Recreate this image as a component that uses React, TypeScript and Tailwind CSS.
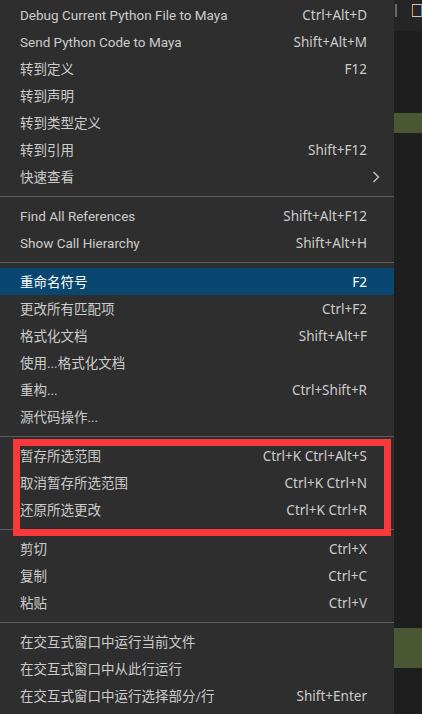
type Item = { label: string; keys?: string; submenu?: boolean; active?: boolean };

const groups: Item[][] = [
  [
    { label: "Debug Current Python File to Maya", keys: "Ctrl+Alt+D" },
    { label: "Send Python Code to Maya", keys: "Shift+Alt+M" },
    { label: "转到定义", keys: "F12" },
    { label: "转到声明" },
    { label: "转到类型定义" },
    { label: "转到引用", keys: "Shift+F12" },
    { label: "快速查看", submenu: true },
  ],
  [
    { label: "Find All References", keys: "Shift+Alt+F12" },
    { label: "Show Call Hierarchy", keys: "Shift+Alt+H" },
  ],
  [
    { label: "重命名符号", keys: "F2", active: true },
    { label: "更改所有匹配项", keys: "Ctrl+F2" },
    { label: "格式化文档", keys: "Shift+Alt+F" },
    { label: "使用...格式化文档" },
    { label: "重构...", keys: "Ctrl+Shift+R" },
    { label: "源代码操作..." },
  ],
  [
    { label: "暂存所选范围", keys: "Ctrl+K Ctrl+Alt+S" },
    { label: "取消暂存所选范围", keys: "Ctrl+K Ctrl+N" },
    { label: "还原所选更改", keys: "Ctrl+K Ctrl+R" },
  ],
  [
    { label: "剪切", keys: "Ctrl+X" },
    { label: "复制", keys: "Ctrl+C" },
    { label: "粘贴", keys: "Ctrl+V" },
  ],
  [
    { label: "在交互式窗口中运行当前文件" },
    { label: "在交互式窗口中从此行运行" },
    { label: "在交互式窗口中运行选择部分/行", keys: "Shift+Enter" },
  ],
];

const MenuRow = ({ item }: { item: Item }) => (
  <div
    className={
      item.active
        ? "relative flex h-[27px] items-center justify-between pl-[20px] pr-[27px] pt-[2px] bg-[#094771] text-white"
        : "relative flex h-[27px] items-center justify-between pl-[20px] pr-[27px] pt-[2px] text-[#cccccc]"
    }
  >
    <span className="font-['Roboto','Noto_Sans_CJK_SC',sans-serif]">{item.label}</span>
    {item.keys && <span>{item.keys}</span>}
    {item.submenu && (
      <svg
        className="absolute right-[14px] top-[8px]"
        width="8"
        height="12"
        viewBox="0 0 8 12"
        fill="none"
        stroke="#cccccc"
        strokeWidth="1.2"
      >
        <path d="M1.5 1 L6.5 6 L1.5 11" />
      </svg>
    )}
  </div>
);

export default function App() {
  return (
    <div
      className="relative flex h-[714px] w-[422px] overflow-hidden bg-[#1e1e1e] text-[13.5px]"
      style={{ fontFamily: '"Noto Sans", "Noto Sans CJK SC", sans-serif' }}
    >
      <div className="w-[394px] shrink-0 bg-[#2e2e2e] pt-[1px]">
        {groups.map((group, gi) => (
          <div key={gi}>
            {gi > 0 && (
              <div className="flex h-[12px] items-center">
                <div className="h-px w-full bg-[#5c5c5c]" />
              </div>
            )}
            {group.map((item) => (
              <MenuRow key={item.label} item={item} />
            ))}
          </div>
        ))}
      </div>

      <div className="flex flex-1 flex-col">
        <div className="flex h-[31px] items-start bg-[#252526] pt-[4px]">
          <div className="ml-[1px] h-[13px] w-[2px] border-x border-[#6a6a6a]" />
          <div className="ml-[15px] h-[13px] w-[10px] border border-[#c8c8c8] border-l-[#d9a44a] border-r-[#4a8ad9]" />
        </div>
        <div className="mt-[82px] h-[20px] bg-[#4b5632]" />
        <div className="mt-[495px] h-[40px] bg-[#4b5632]" />
      </div>

      <div className="pointer-events-none absolute left-[13px] top-[439px] h-[97px] w-[378px] border-[7px] border-[#fa3a3a]" />
    </div>
  );
}
